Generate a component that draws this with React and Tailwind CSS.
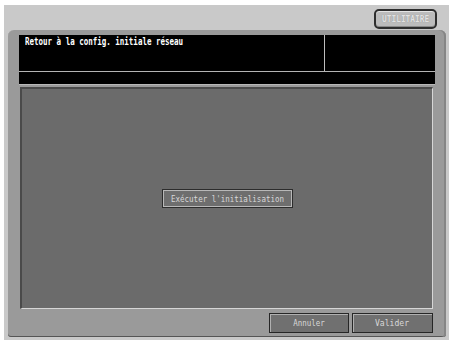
export default function App() {
  const mono = "font-['DejaVu_Sans_Mono','Liberation_Mono',monospace]";
  return (
    <div className="w-[451px] h-[342px] bg-white pt-[5px] pl-[4px] pr-[2px] pb-[2px]">
      <div className="h-full bg-[#c9c9c9] flex flex-col">
        <div className="h-[25px] flex justify-end items-start pt-[4px] pr-[12px]">
          <div className="w-[63px] h-[20px] rounded-[5px] border-2 border-[#2e2e2e] bg-[#bcbcbc] shadow-[inset_0_1px_0_#e4e4e4,inset_0_-1px_0_#8a8a8a] flex items-center justify-center">
            <span className={`${mono} inline-block origin-center scale-x-[0.92] text-[8.5px] font-bold leading-none text-[#e2e2e2] [text-shadow:0_0_1px_#888]`}>UTILITAIRE</span>
          </div>
        </div>
        <div className="flex-1 ml-[4px] mr-[3px] mb-[3px] bg-[#9a9a9a] rounded-t-[6px] rounded-b-[3px] px-[11px] pt-[5px] pb-[4px] flex flex-col shadow-[inset_-2px_0_0_#858585,inset_0_-1px_0_#555]">
          <div className="bg-black flex flex-col">
            <div className="h-[36px] flex">
              <div className="w-[305px] pl-[6px] pt-[2px] flex items-start leading-none">
                <span className={`${mono} block origin-left scale-x-[0.75] text-[10px] font-bold leading-[10px] text-white whitespace-nowrap`}>
                  Retour à la config. initiale réseau
                </span>
              </div>
              <div className="w-[1px] bg-[#bdbdbd]" />
              <div className="flex-1" />
            </div>
            <div className="h-[1px] bg-[#b4b4b4]" />
            <div className="h-[12px]" />
          </div>
          <div className="h-[1px] bg-[#b8b8b8]" />
          <div className="h-[2px]" />
          <div className="h-[222px] ml-[1px] mr-[2px] bg-[#6b6b6b] border-t-2 border-l-2 border-[#4a4a4a] border-b border-r border-b-[#d6d6d6] border-r-[#d6d6d6] flex items-center justify-center">
            <div className="w-[131px] h-[19px] border border-[#2c2c2c] bg-[#6e6e6e] shadow-[inset_0_0_0_1px_#b8b8b8] flex items-center justify-center">
              <span className={`${mono} inline-block origin-center scale-x-[0.79] text-[9.5px] leading-none text-[#d8d8d8] whitespace-nowrap`}>
                Exécuter l'initialisation
              </span>
            </div>
          </div>
          <div className="mt-[4px] mr-[2px] flex justify-end gap-[3px]">
            <div className="w-[80px] h-[20px] border border-[#262626] bg-[#707070] shadow-[inset_1px_1px_0_#b0b0b0] flex items-center justify-center">
              <span className={`${mono} inline-block origin-center scale-x-[0.79] text-[9.5px] leading-none text-[#d8d8d8]`}>Annuler</span>
            </div>
            <div className="w-[81px] h-[20px] border border-[#262626] bg-[#707070] shadow-[inset_1px_1px_0_#b0b0b0] flex items-center justify-center">
              <span className={`${mono} inline-block origin-center scale-x-[0.85] text-[9.5px] leading-none text-[#d8d8d8]`}>Valider</span>
            </div>
          </div>
        </div>
      </div>
    </div>
  );
}
